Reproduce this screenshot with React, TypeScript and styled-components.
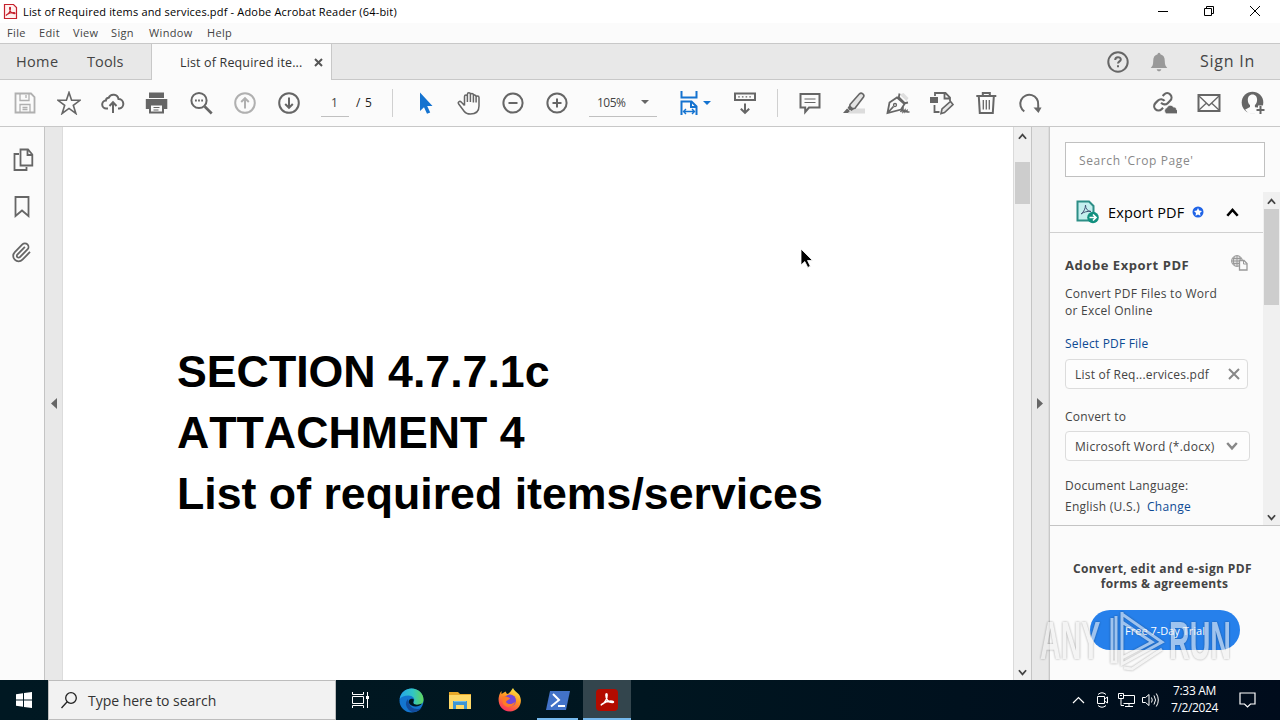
import React from 'react'
import styled, { createGlobalStyle } from 'styled-components'

const GlobalStyle = createGlobalStyle`
  * { box-sizing: border-box; }
  body {
    margin: 0;
    background: #fff;
    font-family: 'Open Sans', 'Noto Sans', sans-serif;
    overflow: hidden;
  }
`

const Window = styled.div`
  position: relative;
  display: flex;
  flex-direction: column;
  width: 1280px;
  height: 720px;
  overflow: hidden;
`

/* one line of text: size, tracking, colour */
const Label = styled.span<{ size?: number; track?: number; color?: string; bold?: boolean }>`
  display: block;
  white-space: pre;
  font-size: ${({ size }) => size || 12}px;
  letter-spacing: ${({ track }) => track || 0}px;
  color: ${({ color }) => color || '#444'};
  font-weight: ${({ bold }) => (bold ? 700 : 400)};
  line-height: 17px;
`

const TitleBar = styled.header`
  display: flex;
  align-items: center;
  height: 23px;
  padding: 0 2px 0 3px;
  background: #fff;
`
const TitleText = styled(Label)`
  flex: 1;
  margin-left: 5px;
`
const CaptionButton = styled.div`
  display: flex;
  justify-content: center;
  width: 46px;
  padding-bottom: 2px;
`

const MenuBar = styled.nav`
  display: flex;
  align-items: center;
  height: 21px;
  padding: 0 0 2px 7px;
  background: #fbfbfb;
  border-bottom: 1px solid #c8c8c8;
`
const MenuItem = styled(Label)<{ w: number }>`
  width: ${({ w }) => w}px;
`

const TabBar = styled.div`
  display: flex;
  height: 36px;
  background: #e8e8e8;
  border-bottom: 1px solid #c8c8c8;
`
const Tab = styled.div<{ w: number }>`
  display: flex;
  align-items: center;
  width: ${({ w }) => w}px;
  padding-left: 16px;
`
const ActiveTab = styled.div`
  display: flex;
  align-items: center;
  justify-content: space-between;
  width: 181px;
  height: 36px;
  padding: 0 8px 0 28px;
  background: #fbfbfb;
  border-left: 1px solid #c8c8c8;
  border-right: 1px solid #c8c8c8;
`
const TabActions = styled.div`
  display: flex;
  align-items: center;
  margin-left: auto;
  padding-right: 25px;
`
const ActionSlot = styled.div<{ w: number }>`
  display: flex;
  width: ${({ w }) => w}px;
`

const Toolbar = styled.div`
  display: flex;
  align-items: center;
  height: 47px;
  padding: 0 5px 0 3px;
  background: #fbfbfb;
  border-bottom: 1px solid #c8c8c8;
`
const Tool = styled.div`
  display: flex;
  justify-content: center;
  width: 44px;
  flex: none;
`
const Divider = styled.div<{ before: number }>`
  width: 1px;
  height: 28px;
  margin: 0 10px 0 ${({ before }) => before}px;
  background: #d0d0d0;
`
const PageField = styled.div`
  width: 28px;
  height: 27px;
  margin: 0 7px 0 10px;
  padding: 4px 0 0 10px;
  border-bottom: 1px solid #c0c0c0;
`
const PageCount = styled(Label)`
  width: 36px;
  padding-bottom: 1px;
`
const ZoomField = styled.div`
  display: flex;
  justify-content: space-between;
  width: 68px;
  height: 27px;
  margin-left: 10px;
  padding: 4px 8px 5px 8px;
  border-bottom: 1px solid #c0c0c0;
`
const FitTool = styled.div`
  display: flex;
  align-items: center;
  gap: 5px;
  width: 66px;
  padding: 0 0 1px 23px;
`
const Caret = styled.i<{ color?: string }>`
  align-self: center;
  border: 4px solid transparent;
  border-top-color: ${({ color }) => color || '#666'};
  border-bottom: 0;
`
const Spacer = styled.div`
  flex: 1;
`

const Body = styled.main`
  display: flex;
  height: 553px;
`
const NavRail = styled.aside`
  display: flex;
  flex-direction: column;
  align-items: center;
  gap: 22px;
  width: 44px;
  padding-top: 21px;
  background: #fbfbfb;
`
const Gutter = styled.div<{ w: number }>`
  display: flex;
  align-items: center;
  justify-content: center;
  width: ${({ w }) => w}px;
  background: #e8e8e8;
  border-left: 1px solid #c4c4c4;
  border-right: 1px solid #dcdcdc;
`
const Page = styled.article`
  width: 950px;
  padding: 214px 0 0 114px;
  background: #fff;
`
const Heading = styled.p`
  margin: 0;
  font: bold 44.7px/61px 'Liberation Sans', Arial, sans-serif;
  font-kerning: none;
  white-space: nowrap;
  color: #000;
`
const Scrollbar = styled.div<{ w: number; edge?: boolean }>`
  display: flex;
  flex-direction: column;
  align-items: center;
  width: ${({ w }) => w}px;
  background: #f0f0f0;
  border-left: ${({ edge }) => (edge ? '1px solid #dadada' : '0')};
`
const ScrollThumb = styled.div<{ top: number; h: number }>`
  width: 15px;
  height: ${({ h }) => h}px;
  margin-top: ${({ top }) => top}px;
  margin-bottom: auto;
  background: #cdcdcd;
`
const ScrollArrow = styled.div`
  display: flex;
  align-items: center;
  height: 17px;
  padding-top: 2px;
`

const SidePanel = styled.aside`
  display: flex;
  flex-direction: column;
  width: 231px;
  background: #fbfbfb;
  border-left: 1px solid #c8c8c8;
`
const SearchBox = styled.div`
  display: flex;
  align-items: center;
  flex: none;
  width: 200px;
  height: 35px;
  margin: 15px 0 15px 15px;
  padding: 1px 0 0 13px;
  background: #fff;
  border: 1px solid #c0c0c0;
`
const PanelScroll = styled.div`
  display: flex;
  justify-content: space-between;
  height: 334px;
  border-bottom: 1px solid #c4c4c4;
`
const PanelContent = styled.div`
  width: 213px;
`
const ExportHeader = styled.div`
  display: flex;
  align-items: center;
  height: 41px;
  padding: 0 24px 0 26px;
  border-bottom: 1px solid #d0d0d0;
`
const ExportName = styled(Label)`
  width: 84px;
  margin-left: 9px;
`
const ExportForm = styled.div`
  padding: 22px 0 0 15px;
`
const FormHead = styled.div`
  display: flex;
  align-items: center;
  justify-content: space-between;
  width: 183px;
  margin-bottom: 10px;
`
const FormLink = styled(Label)`
  margin-top: 16px;
`
const Field = styled.div<{ w: number; before: number; after: number; inset: number }>`
  display: flex;
  align-items: center;
  justify-content: space-between;
  width: ${({ w }) => w}px;
  height: 30px;
  margin: ${({ before }) => before}px 0 ${({ after }) => after}px;
  padding: 0 ${({ inset }) => inset}px 0 9px;
  background: #fdfdfd;
  border: 1px solid #dcdcdc;
  border-radius: 4px;
`
const LanguageRow = styled.div`
  display: flex;
  gap: 7px;
  margin-top: 4px;
`
const Promo = styled.section`
  display: flex;
  flex-direction: column;
  align-items: center;
  padding: 35px 5px 0 0;
`
const PromoText = styled(Label)<{ indent?: number }>`
  padding-left: ${({ indent }) => indent || 0}px;
  line-height: 15px;
`
const TrialButton = styled.div`
  display: flex;
  align-items: center;
  justify-content: center;
  width: 150px;
  height: 40px;
  margin: 19px 0 0 5px;
  border-radius: 20px;
  background: #2680eb;
`

/* translucent recorder mark lying over the corner of the desktop */
const Watermark = styled.div`
  position: absolute;
  left: 1040px;
  top: 610px;
  display: flex;
  width: 200px;
  height: 62px;
  opacity: 0.6;
  filter: drop-shadow(0 0 1px rgba(0, 0, 0, 0.55));
`
const MarkWord = styled.div<{ w: number; stretch: number }>`
  width: ${({ w }) => w}px;
  padding-top: 3px;
  font: bold 53px/56px 'Liberation Sans', Arial, sans-serif;
  color: #f0f0f0;
  transform: scaleX(${({ stretch }) => stretch});
  transform-origin: 0 0;
`
const MarkLogo = styled.div`
  width: 59px;
`

const Pointer = styled.div`
  position: absolute;
  left: 800px;
  top: 248px;
`

const Taskbar = styled.footer`
  display: flex;
  height: 40px;
  background: linear-gradient(90deg, #001822 0%, #001620 50%, #000c1c 100%);
`
const StartButton = styled.div`
  display: flex;
  align-items: center;
  justify-content: center;
  width: 48px;
`
const TaskSearch = styled.div`
  display: flex;
  align-items: center;
  gap: 11px;
  width: 288px;
  padding-left: 12px;
  background: #f2f2f2;
  border: 1px solid #bdbdbd;
`
const TaskApp = styled.div<{ w: number; running?: boolean; active?: boolean }>`
  display: flex;
  align-items: center;
  justify-content: center;
  width: ${({ w }) => w}px;
  padding-top: ${({ running }) => (running ? 2 : 0)}px;
  background: ${({ active }) => (active ? '#33454d' : 'transparent')};
  border-bottom: ${({ running }) => (running ? '2px solid #76b9ed' : '0')};
`
const Tray = styled.div`
  display: flex;
  align-items: center;
  margin-left: auto;
`
const TrayIcon = styled.div`
  display: flex;
  justify-content: center;
  width: 24px;
`
const Clock = styled.div`
  display: flex;
  flex-direction: column;
  align-items: center;
  width: 66px;
  padding: 0 1px 2px 0;
`
const ActionCenter = styled.div`
  display: flex;
  justify-content: center;
  width: 38px;
  margin-right: 14px;
`

const paths: Record<string, React.ReactNode> = {
  star: <path d="M12 1.500 14.600 9.300H23l-6.700 5 2.600 8.200L12 17.400l-6.900 5.100 2.600-8.200L1 9.300h8.400z" strokeWidth="1.600" />,
  save: (
    <>
      <path d="M2.500 2.500h15.500l3.500 3.500v15.500h-19z" strokeWidth="1.800" />
      <path d="M7 3v6.500h9V3M13 4v3M7 21v-7.500h10V21M9.500 16.500h5M9.500 18.500h5" strokeWidth="1.300" />
    </>
  ),
  cloud: (
    <>
      <path d="M7 17.500H5.500a4 4 0 0 1-.6-8A3 3 0 0 1 7.700 6.800 5.200 5.200 0 0 1 17.500 8a4.800 4.800 0 0 1 1 9.500H17" />
      <path d="M12 22V11.500M8.500 15l3.500-3.800 3.500 3.800" />
    </>
  ),
  print: (
    <>
      <path d="M5 2.500h13v5H5z" fill="currentColor" />
      <path d="M.8 8h21.500v10H.8z" fill="currentColor" stroke="none" />
      <path d="M4 7.500h15" stroke="#fbfbfb" strokeWidth="1" />
      <path d="M5 13.500h13v8H5z" fill="#fbfbfb" />
      <path d="M8.500 16.500h6M8.500 19h5" strokeWidth="1.200" />
    </>
  ),
  search: (
    <>
      <circle cx="10" cy="9.500" r="7.600" />
      <path d="m15.700 15.500 7 7" strokeWidth="2.600" />
      <path d="M6 9.500h1.800M9.100 9.500h1.800M12.200 9.500h1.800" />
    </>
  ),
  up: (
    <>
      <circle cx="12" cy="12" r="9.800" />
      <path d="M12 17.500V7.500M8.200 11 12 7.200l3.800 3.800" />
    </>
  ),
  down: (
    <>
      <circle cx="12" cy="12" r="9.800" />
      <path d="M12 6.500v10M8.200 13l3.800 3.800 3.800-3.800" />
    </>
  ),
  minus: (
    <>
      <circle cx="12" cy="12" r="9.600" />
      <path d="M7.500 12h9" />
    </>
  ),
  plus: (
    <>
      <circle cx="12" cy="12" r="9.600" />
      <path d="M7.500 12h9M12 7.500v9" />
    </>
  ),
  select: <path d="M7 1.500v18.500l4-3.800 3 6.500 3.200-1.300-3-6.400h5.300z" fill="currentColor" stroke="none" />,
  hand: (
    <path
      d="M7.500 14.500 4.200 11c-1.500-1.500-3.800.2-2.500 2l5.600 7.500c1.500 2 3.500 2.500 6 2.500 5 0 8.700-2.500 8.700-8V6.500c0-2-2.900-2-2.900 0v5M7.500 14.500v-9c0-2 2.900-2 2.900 0V11M10.400 11V3.200c0-2 3-2 3 0V11M13.400 4c0-2 3-2 3 0v7.500M16.400 5c0-1.500 2.700-1.800 2.700 1"
      strokeWidth="1.500"
    />
  ),
  keyboard: (
    <>
      <path d="M2 2.500h20v6.500H2z" />
      <path d="M5.200 5.800h1.600M8.900 5.800h1.600M12.600 5.800h1.600M16.300 5.800h1.600" strokeWidth="1.300" />
      <path d="M12 12.500v9M7.800 17.800 12 21.800l4.200-4" />
    </>
  ),
  comment: (
    <>
      <path d="M2.500 3h19v13.500H11l-3.800 4.500v-4.500H2.500z" />
      <path d="M6.500 8h11M6.500 11.500h11" strokeWidth="1.200" />
    </>
  ),
  highlight: (
    <>
      <path d="M10 17.500h13v5H6z" fill="#dcdcdc" stroke="none" />
      <path d="M8 13.500 17.500 2.800c2-1.800 5.500.8 4 3.200L13 17.200l-5.500.8z" fill="#e4e4e4" strokeWidth="1.600" />
      <path d="m7.500 14 4.500 4-2.500 2-4-3zM5 17.500 1 22h5l2-2z" fill="currentColor" stroke="none" />
    </>
  ),
  sign: (
    <>
      <path d="m13.500 3.500 4-1.500 5 5-2 3z" fill="#dedede" stroke="none" />
      <path d="M1.500 22 3.500 11.500 11 6.500l7.500 6.500-3.500 5.500zM1.500 22l6-6.500" strokeWidth="1.800" />
      <path d="m12.500 8 1-5.500M17.500 12.500l4.500-1M12 5.500l7 7" strokeWidth="1.800" />
      <circle cx="9" cy="14" r="1.500" strokeWidth="1.300" />
      <path d="m14.500 21 2.500-3.500v3.500l2-2v2l2-1.500v1.500h2.500" strokeWidth="1.500" />
    </>
  ),
  edit: (
    <>
      <path d="M5 5V2h10.500L20 6.500V10M14.500 2v5.500H20M4.500 14v7h5" strokeWidth="1.800" />
      <path d="M0 6h8v6H0z" fill="currentColor" stroke="none" />
      <path d="m11 22.500 1-4.500 8.500-7.500 2.500 3-8.500 8z" fill="#e8e8e8" strokeWidth="1.600" />
    </>
  ),
  trash: (
    <>
      <path d="M2.300 5h20M8.800 4.500V2h7v2.500M4.800 5.500l1 16.500h13l1-16.500" />
      <path d="M9.300 9v9.500M12.300 9v9.500M15.300 9v9.500" strokeWidth="1.300" />
    </>
  ),
  rotate: (
    <>
      <path d="M6.300 20.300A9 9 0 1 1 20.200 14v5" />
      <path d="M15.500 16.500h8l-3 5.500z" fill="currentColor" stroke="none" />
    </>
  ),
  link: (
    <>
      <g transform="translate(-.6 .4) scale(.87)" strokeWidth="2.500">
        <path d="M10 13a5 5 0 0 0 7.540.540l3-3a5 5 0 0 0-7.070-7.070l-1.720 1.710" />
        <path d="M14 11a5 5 0 0 0-7.540-.540l-3 3a5 5 0 0 0 7.070 7.070l1.710-1.710" />
      </g>
      <path
        d="M13.500 22.800a3.200 3.200 0 0 1 .3-6 3.700 3.700 0 0 1 6.700-.8c2.200-.2 3 1.400 2.900 2.600a2.200 2.200 0 0 1 0 4.200z"
        fill="currentColor"
        stroke="#fbfbfb"
        strokeWidth=".7"
      />
    </>
  ),
  mail: (
    <>
      <path d="M1.500 4h21v16h-21z" />
      <path d="m2 5 10 9.500L22 5M2 19l7.500-7M22 19l-7.500-7" strokeWidth="1.300" />
    </>
  ),
  user: (
    <>
      <circle cx="11.500" cy="11.500" r="10.800" fill="currentColor" stroke="none" />
      <path d="M11.500 3.500c3 0 4.600 2.300 4.600 5.200 0 2.400-1 4.300-2.200 5.300v2l3.600 1.700v5H8l-4-4 5-2.700v-2c-1.300-1-2.200-2.900-2.200-5.300 0-2.900 1.700-5.200 4.700-5.200z" fill="#fbfbfb" stroke="none" />
      <path d="M19.500 14.500v9M15 19h9" stroke="#fbfbfb" strokeWidth="5" />
      <path d="M19.500 15v8M15.500 19h8" />
    </>
  ),
  bell: (
    <path
      d="M12 2c1 0 1.500.8 1.500 1.600C17 4.500 18.300 7 18.300 11c0 4 .8 5.500 2.700 7.500H3C5 16.500 5.700 15 5.700 11c0-4 1.300-6.500 4.800-7.400C10.500 2.800 11 2 12 2zM9.500 20h5c-.3 1.500-1.300 2.200-2.500 2.200S9.800 21.500 9.500 20z"
      fill="currentColor"
      stroke="none"
    />
  ),
  pages: (
    <>
      <path d="M10.500 1.500H18l4.300 5V17.500H10.500zM17.500 2V7h5" strokeWidth="1.800" />
      <path d="M9 6H4.500v16H16.500v-3" strokeWidth="1.800" />
    </>
  ),
  bookmark: <path d="M5.500 3h13v19L12 16.500 5.500 22z" strokeWidth="1.800" />,
  clip: (
    <path
      d="m16 6-8.414 8.586a2 2 0 0 0 2.829 2.829l8.414-8.586a4 4 0 1 0-5.657-5.657l-8.379 8.551a6 6 0 1 0 8.485 8.485l8.379-8.551"
      transform="translate(.5 1.500) scale(.9)"
    />
  ),
}

function Icon({ name, size = 24, color = '#666' }: any) {
  return (
    <svg width={size} height={size} viewBox="0 0 24 24" fill="none" stroke="currentColor" strokeWidth="2" color={color}>
      {paths[name]}
    </svg>
  )
}

function Chevron({ up, size = 9, weight = 2, color = '#444' }: any) {
  return (
    <svg width={size} height={size} viewBox="0 0 10 10" fill="none" stroke={color} strokeWidth={weight}>
      <path d={up ? 'M1 7.500 5 3l4 4.500' : 'M1 2.500 5 7l4-4.500'} />
    </svg>
  )
}

const acrobatMark = 'M5 17c4-2 7-7 7-12 0-2-1.500-2-1.500 0 0 5 3 9 8 9.500 2 0 2-1.500 0-1.800-4.500-.5-9 1-12.500 3.300-1.500 1-1.500 2-1 1z'

const menus = [
  { text: 'File', w: 32 },
  { text: 'Edit', w: 34 },
  { text: 'View', w: 38 },
  { text: 'Sign', w: 38 },
  { text: 'Window', w: 58 },
  { text: 'Help', w: 40 },
]

function WindowHead() {
  return (
    <>
      <TitleBar>
        <svg width="15" height="17" viewBox="0 0 15 17">
          <path d="M1.500 1.500h9l3 3v11h-12z" fill="#fff1f0" stroke="#c5202c" strokeWidth="1.200" />
          <path d={acrobatMark} transform="translate(.5 2.200) scale(.58)" fill="none" stroke="#c5202c" strokeWidth="2" />
        </svg>
        <TitleText size={11} track={0.175} color="#000">List of Required items and services.pdf - Adobe Acrobat Reader (64-bit)</TitleText>
        <CaptionButton>
          <svg width="12" height="12" stroke="#000"><path d="M1 6.500h10" /></svg>
        </CaptionButton>
        <CaptionButton>
          <svg width="12" height="12" fill="none" stroke="#000"><path d="M1.500 3.500h7v7h-7zM3.500 3.500v-2h7v7h-2" /></svg>
        </CaptionButton>
        <CaptionButton>
          <svg width="12" height="12" stroke="#000"><path d="m1 1 10 10M11 1 1 11" /></svg>
        </CaptionButton>
      </TitleBar>
      <MenuBar>
        {menus.map(m => (
          <MenuItem key={m.text} size={11} track={0.35} w={m.w}>{m.text}</MenuItem>
        ))}
      </MenuBar>
      <TabBar>
        <Tab w={71}><Label size={14.500} track={0.35}>Home</Label></Tab>
        <Tab w={80}><Label size={14.500} track={0.1}>Tools</Label></Tab>
        <ActiveTab>
          <Label size={12.500} track={0.15} color="#333">List of Required ite...</Label>
          <svg width="9" height="9" stroke="#555" strokeWidth="2"><path d="m1 1 7 7M8 1 1 8" /></svg>
        </ActiveTab>
        <TabActions>
          <ActionSlot w={42}>
            <svg width="24" height="24" fill="none" stroke="#666" strokeWidth="2">
              <circle cx="12" cy="12" r="9.700" />
              <path d="M9.200 10c0-3.800 5.600-3.600 5.600-.6 0 2-2.800 2-2.800 4.200M12 15.200v2" />
            </svg>
          </ActionSlot>
          <ActionSlot w={52}><Icon name="bell" color="#999" size={22} /></ActionSlot>
          <Label size={16} track={0.75}>Sign In</Label>
        </TabActions>
      </TabBar>
    </>
  )
}

function Tools({ names, muted = [] }: { names: string[]; muted?: string[] }) {
  return (
    <>
      {names.map(n => (
        <Tool key={n}>
          <Icon name={n} color={n === 'select' ? '#1473d0' : muted.includes(n) ? '#b0b0b0' : '#666'} />
        </Tool>
      ))}
    </>
  )
}

function MainToolbar() {
  return (
    <Toolbar>
      <Tools names={['save', 'star', 'cloud', 'print', 'search', 'up', 'down']} muted={['save', 'up']} />
      <PageField><Label size={12}>1</Label></PageField>
      <PageCount size={12} track={0.7} color="#222">/ 5</PageCount>
      <Divider before={0} />
      <Tools names={['select', 'hand', 'minus', 'plus']} />
      <ZoomField>
        <Label size={12} track={-0.5}>105%</Label>
        <Caret />
      </ZoomField>
      <FitTool>
        <svg width="18" height="25" viewBox="0 0 18 25" fill="none" stroke="#1473d0" strokeWidth="2">
          <path d="M1.500 1v6.500h15V1M1.500 25V11.500h10l5 5V25M11 12v5h5" />
          <path d="M3.500 21.500h11M6 19l-2.500 2.500L6 24M12 19l2.500 2.500L12 24" strokeWidth="1.400" />
        </svg>
        <Caret color="#1473d0" />
      </FitTool>
      <Tools names={['keyboard']} />
      <Divider before={10} />
      <Tools names={['comment', 'highlight', 'sign', 'edit', 'trash', 'rotate']} />
      <Spacer />
      <Tools names={['link', 'mail', 'user']} />
    </Toolbar>
  )
}

function ExportPanel() {
  return (
    <SidePanel>
      <SearchBox><Label size={12} track={0.6} color="#888">Search 'Crop Page'</Label></SearchBox>
      <PanelScroll>
        <PanelContent>
          <ExportHeader>
            <svg width="23" height="24" viewBox="0 0 23 24" fill="none">
              <path d="M1.500 1.500h11.500l4.500 4.500v14.500h-16z" fill="#c4efee" stroke="#2d8e86" strokeWidth="2" />
              <path d="M5 14c3-2 4.500-6 4.500-9 0 4 2 6 5.500 6.500-4-.5-7 .5-10 2.500z" stroke="#457" strokeWidth="1" />
              <circle cx="17" cy="17.500" r="5.800" fill="#12907f" />
              <path d="M13.500 17.500h6M17 14.500l3 3-3 3" stroke="#fff" strokeWidth="1.700" />
            </svg>
            <ExportName size={14.500} track={0.15} color="#000">Export PDF</ExportName>
            <svg width="12" height="12" viewBox="0 0 12 12">
              <circle cx="6" cy="6" r="5.500" fill="#1f63e6" />
              <path d="m6 2 1.200 2.600 2.800.4-2 2 .5 2.800L6 8.500 3.500 9.800 4 7 2 5l2.800-.4z" fill="#fff" />
            </svg>
            <Spacer />
            <Chevron up size={13} color="#000" />
          </ExportHeader>
          <ExportForm>
            <FormHead>
              <Label size={13} track={0.55} bold>Adobe Export PDF</Label>
              <svg width="17" height="20" viewBox="0 0 17 20" fill="none" stroke="#999">
                <circle cx="6" cy="6" r="5.400" fill="#ddd" />
                <path d="M.5 6H11M6 .5v11M3.500 1.500c-1.500 3-1.500 6 0 9M8.500 1.500c1 2 1 4 0 6M1.500 3.500h9M1.500 8.500h7" />
                <path d="M8.500 5.500h4.500l3 3v6.500H8.500z" fill="#fbfbfb" strokeWidth="1.300" />
                <path d="M12.500 6v3H16" />
              </svg>
            </FormHead>
            <Label size={12} track={0.27}>Convert PDF Files to Word</Label>
            <Label size={12} track={0.27}>or Excel Online</Label>
            <FormLink size={12} track={0.2} color="#0d4a94">Select PDF File</FormLink>
            <Field w={183} before={7} after={19} inset={7}>
              <Label size={12} track={0.22}>List of Req...ervices.pdf</Label>
              <svg width="12" height="12" stroke="#888" strokeWidth="2"><path d="m1 1 10 10M11 1 1 11" /></svg>
            </Field>
            <Label size={12} track={0.25}>Convert to</Label>
            <Field w={185} before={6} after={16} inset={11}>
              <Label size={12} track={0.28}>Microsoft Word (*.docx)</Label>
              <Chevron size={12} color="#888" />
            </Field>
            <Label size={12} track={0.25}>Document Language:</Label>
            <LanguageRow>
              <Label size={12} track={0.25}>English (U.S.)</Label>
              <Label size={12} track={0.3} color="#0d4a94">Change</Label>
            </LanguageRow>
          </ExportForm>
        </PanelContent>
        <Scrollbar w={17}>
          <ScrollArrow><Chevron up /></ScrollArrow>
          <ScrollThumb top={0} h={96} />
          <ScrollArrow><Chevron /></ScrollArrow>
        </Scrollbar>
      </PanelScroll>
      <Promo>
        <PromoText size={12} track={0.4} bold>Convert, edit and e-sign PDF</PromoText>
        <PromoText size={12} track={0.3} indent={4} bold>forms & agreements</PromoText>
        <TrialButton><Label size={11} color="#fff">Free 7-Day Trial</Label></TrialButton>
      </Promo>
    </SidePanel>
  )
}

function TaskbarView() {
  return (
    <Taskbar>
      <StartButton>
        <svg width="16" height="16" fill="#fff">
          <path d="M0 2.300 7 1.300V7.500H0zM8 1.100 16 0v7.500H8zM0 8.500h7v6.200L0 13.700zM8 8.500h8V16l-8-1.100z" />
        </svg>
      </StartButton>
      <TaskSearch>
        <svg width="16" height="17" fill="none" stroke="#222" strokeWidth="1.300">
          <circle cx="10" cy="6" r="5.300" />
          <path d="M6.200 9.800.5 16" />
        </svg>
        <Label size={14} track={-0.03} color="#333">Type here to search</Label>
      </TaskSearch>
      <TaskApp w={49}>
        <svg width="17" height="16" fill="none" stroke="#fff">
          <path d="M.5 0v2.500h11V0M.5 4.500h11v7H.500zM.5 16v-2.500h11V16M15.500 0v16" />
          <path d="M14 4h3v3h-3z" fill="#fff" stroke="none" />
        </svg>
      </TaskApp>
      <TaskApp w={53}>
        <svg width="25" height="25" viewBox="0 0 25 25">
          <defs>
            <linearGradient id="edgeTop" x1="0" x2="1"><stop offset="0" stopColor="#25a5e8" /><stop offset=".55" stopColor="#31c5c5" /><stop offset="1" stopColor="#62d65a" /></linearGradient>
          </defs>
          <circle cx="12.500" cy="12.500" r="12" fill="#1375cf" />
          <path d="M.7 11C2 4 7 .5 12.500.5c7 0 12 5 12 11 0 4-3 6-6.500 6-3 0-4.500-1.500-3.500-3 2.500-4-1-7-5-7C5.500 7.500 2 9 .7 11z" fill="url(#edgeTop)" />
          <path d="M9 11c-4.500 4-1 11 4 13 4 .4 7.500-1 9.500-4-5 2.500-13 .5-13.500-9z" fill="#124c9c" />
          <path d="M14.500 11c1 1.500-.8 2.800 0 4.200 1.300 2 5 1.800 8.500.3-2.500 4-11 4-13-.5-.8-2 .5-5 4.500-4z" fill="#001620" />
        </svg>
      </TaskApp>
      <TaskApp w={44}>
        <svg width="22" height="19" viewBox="0 0 22 19">
          <path d="M0 1h9l2 2h11v14H0z" fill="#e9a928" />
          <path d="M0 4h22v14H0z" fill="#ffd968" />
          <path d="M4 10h14v8h-3v-4H7v4H4z" fill="#3e95d4" />
          <path d="M5 10h12v1H5z" fill="#72bce8" />
        </svg>
      </TaskApp>
      <TaskApp w={55}>
        <svg width="24" height="24" viewBox="0 0 24 24">
          <defs>
            <linearGradient id="fox" x1=".8" y1="0" x2=".3" y2="1"><stop offset="0" stopColor="#fff04a" /><stop offset=".45" stopColor="#ff9820" /><stop offset="1" stopColor="#fa2c62" /></linearGradient>
          </defs>
          <path d="M15 0c1 3 3.500 3.500 6 6.500 5 8-.5 17-9 17S-.5 16 .8 9C1.300 6.500 2 4.500 3.500 3v3l4-2.500L9 6c2.500-.5 4-3 6-6z" fill="url(#fox)" />
          <circle cx="12" cy="12.500" r="6" fill="#7448d8" />
          <path d="M4 9c3-1 6 0 8 1 0 2-3 1.500-4 4 2 3 6 2.500 9 0-1 5-8 7-12 2z" fill="#ff7b26" />
        </svg>
      </TaskApp>
      <TaskApp running w={41}>
        <svg width="24" height="19" viewBox="0 0 24 19">
          <path d="M4 0h20l-4 19H0z" fill="#4272c8" />
          <path d="m7 3 6 6-8 6.500M12 15h7" fill="none" stroke="#fff" strokeWidth="2" />
        </svg>
      </TaskApp>
      <TaskApp w={5} />
      <TaskApp running active w={48}>
        <svg width="22" height="22" viewBox="0 0 22 22">
          <rect width="22" height="22" rx="4" fill="#b30b00" />
          <path d={acrobatMark} fill="none" stroke="#fff" strokeWidth="1.900" transform="translate(1.500 2) scale(.8)" />
        </svg>
      </TaskApp>
      <Tray>
        <TrayIcon><svg width="13" height="8" fill="none" stroke="#fff" strokeWidth="1.200"><path d="m1 7 5.500-5.500L12 7" /></svg></TrayIcon>
        <TrayIcon>
          <svg width="12" height="16" fill="none" stroke="#fff">
            <path d="M2 2.500Q6-1 10 2.500M2 13.500Q6 17 10 13.500M1.500 4.500h7v7h-7zM8.500 7l3-2v6l-3-2" />
          </svg>
        </TrayIcon>
        <TrayIcon>
          <svg width="17" height="15" fill="none" stroke="#fff">
            <path d="M5.500 2.500h11v8h-11M.500.500h5v5h-5zM3 5.500v7h3M11 10.500v3M7 13.500h8" />
            <path d="M2 2.500h2" />
          </svg>
        </TrayIcon>
        <TrayIcon>
          <svg width="17" height="14" fill="none" stroke="#fff">
            <path d="M.5 4.500h3L7 1.500v11L3.500 9.500h-3zM9.500 4.500q1.500 2.500 0 5M12 2.500q3 4.500 0 9M14.300.5q4 6.500 0 13" />
          </svg>
        </TrayIcon>
        <Clock>
          <Label size={12} track={-0.3} color="#fff">7:33 AM</Label>
          <Label size={12} track={-0.4} color="#fff">7/2/2024</Label>
        </Clock>
        <ActionCenter>
          <svg width="17" height="16" fill="none" stroke="#fff" strokeWidth="1.200"><path d="M1 1h15v11h-4.500L8.500 15l-3-3H1z" /></svg>
        </ActionCenter>
      </Tray>
    </Taskbar>
  )
}

export default function App() {
  return (
    <Window>
      <GlobalStyle />
      <WindowHead />
      <MainToolbar />
      <Body>
        <NavRail>
          <Icon name="pages" />
          <Icon name="bookmark" />
          <Icon name="clip" />
        </NavRail>
        <Gutter w={19}><svg width="6" height="11" fill="#666"><path d="M6 0v11L0 5.500z" /></svg></Gutter>
        <Page>
          <Heading>SECTION 4.7.7.1c</Heading>
          <Heading>ATTACHMENT 4</Heading>
          <Heading>List of required items/services</Heading>
        </Page>
        <Scrollbar w={18} edge>
          <ScrollArrow><Chevron up /></ScrollArrow>
          <ScrollThumb top={18} h={42} />
          <ScrollArrow><Chevron /></ScrollArrow>
        </Scrollbar>
        <Gutter w={18}><svg width="6" height="11" fill="#666"><path d="M0 0v11l6-5.500z" /></svg></Gutter>
        <ExportPanel />
      </Body>
      <TaskbarView />
      <Pointer>
        <svg width="13" height="20" viewBox="0 0 13 20"><path d="M1 1v16l3.800-3.500 3 6 2.500-1.300-2.800-5.700h5z" fill="#000" stroke="#fff" strokeWidth=".8" /></svg>
      </Pointer>
      <Watermark>
        <MarkWord w={70} stretch={0.54}>ANY</MarkWord>
        <MarkLogo>
          <svg width="60" height="62" fill="none" stroke="#f0f0f0" strokeWidth="3">
            <path d="M2 8v44h4V6M12 2v52l40-22L12 4M12 12l30 20-30 16M14 58l8 1 30-20" />
          </svg>
        </MarkLogo>
        <MarkWord w={68} stretch={0.54}>RUN</MarkWord>
      </Watermark>
    </Window>
  )
}
